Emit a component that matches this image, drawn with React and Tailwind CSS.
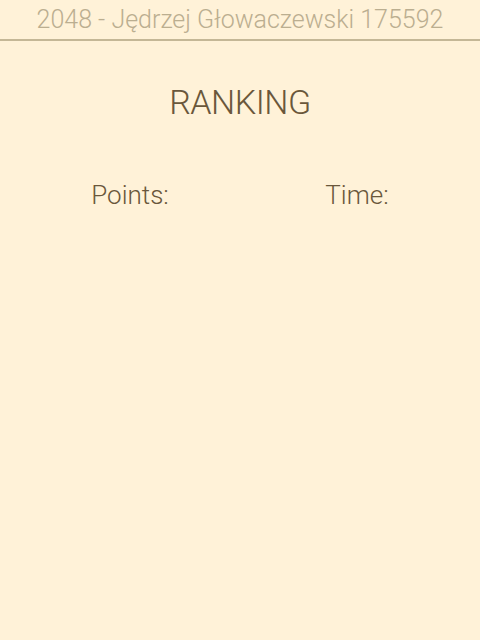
export default function App() {
  const font = { fontFamily: "Roboto, 'Open Sans', sans-serif" };
  return (
    <div className="min-h-[640px] w-full bg-[#fff2d8] font-light" style={font}>
      <div className="h-[41px] border-b-2 border-[#c4b796] flex items-center justify-center">
        <span className="text-[25px] leading-none text-[#bbae90]">2048 - Jędrzej Głowaczewski 175592</span>
      </div>
      <div className="flex justify-center pt-[44px]">
        <h1 className="text-[34px] leading-none tracking-[-0.5px] text-[#6a573b]">RANKING</h1>
      </div>
      <div className="flex justify-center pl-[7px] pt-[63px]">
        <div className="w-[227px] text-center text-[26px] leading-none text-[#6a573b]">Points:</div>
        <div className="w-[227px] text-center text-[26px] leading-none text-[#6a573b]">Time:</div>
      </div>
    </div>
  );
}
